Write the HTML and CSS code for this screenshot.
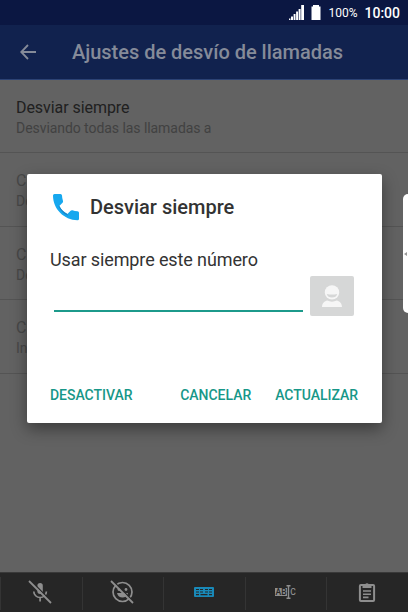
FILE: index.html
```html
<!DOCTYPE html>
<html lang="es">
<head>
    <meta charset="UTF-8">
    <title>Ajustes de desvío de llamadas</title>
    <link rel="stylesheet" href="styles.css">
</head>

<body>

    <div class="status">
        <svg class="signal" width="15" height="15" viewBox="0 0 15 15"><path d="M0 15v-1.500h1.500V15zM2 15v-3.500h2V15zM4.600 15V9h1.900v6zM7.100 15V6.500H9V15zM9.600 15V4h2v11zM12.200 15V0H15v15z"/></svg>
        <svg class="battery" width="10" height="15" viewBox="0 0 10 15"><path d="M2 0h6v1.5h1.5V15H.5V1.5H2z"/></svg>
        <span class="percent">100%</span>
        <span class="clock">10:00</span>
    </div>

    <header class="header">
        <svg class="back" width="16" height="16" viewBox="0 0 16 16"><path d="M16 8H1.5M8 1L1.2 8L8 15"/></svg>
        <h1>Ajustes de desvío de llamadas</h1>
    </header>

    <main class="content">
        <ul class="list">
            <li class="item active"><p class="name">Desviar siempre</p><p class="desc">Desviando todas las llamadas a</p></li>
            <li class="item"><p class="name">C</p><p class="desc">De</p></li>
            <li class="item"><p class="name">C</p><p class="desc">De</p></li>
            <li class="item"><p class="name">C</p><p class="desc">In</p></li>
        </ul>
    </main>

    <nav class="tools">
        <span class="tool">
            <svg width="24" height="24" viewBox="0 0 24 24"><rect class="fill" x="9.4" y="3" width="5.4" height="11" rx="2.7"/><path d="M5.8 11.5a6.3 6 0 0 0 12.6 0M12.1 17v4.5" stroke-width="1.7"/><path class="gap" d="M2.5 .5l22 22"/><path d="M1 1l22 22" stroke-width="1.8"/></svg>
        </span>
        <span class="tool">
            <svg width="24" height="24" viewBox="0 0 24 24"><circle cx="12.5" cy="12" r="9.5" stroke-width="1.7"/><circle class="fill" cx="9" cy="9.5" r="1.4"/><circle class="fill" cx="16" cy="9.5" r="1.4"/><path class="fill" d="M7 13h11c-1 6-10 6-11 0z"/><path class="gap" d="M2.5 .5l22 22"/><path d="M1 1l22 22" stroke-width="1.8"/></svg>
        </span>
        <span class="tool on">
            <svg width="20" height="10" viewBox="0 0 20 10"><rect class="fill" width="20" height="10" rx="1"/><path class="keys" d="M2 2.5h3M6 2.5h3M11 2.5h3M15 2.5h3M2 5h3M6 5h3M11 5h3M15 5h3M2 7.7h3M6.5 7.7h7M15 7.7h3"/></svg>
        </span>
        <span class="tool">
            <svg width="21" height="14" viewBox="0 0 21 14"><rect class="fill" y="3" width="12" height="8"/><text class="letters dark" x=".6" y="10">AB</text><path d="M11.5 .7h4M13.5 1v12M11.5 13.3h4" stroke-width="1.4"/><text class="letters" x="15.3" y="10">C</text></svg>
        </span>
        <span class="tool">
            <svg width="18" height="20" viewBox="0 0 18 20"><rect x="1.9" y="3" width="14.2" height="16" rx="1" stroke-width="2"/><path class="fill" d="M4.5 2.5h2.7a1.9 1.9 0 0 1 3.6 0h2.7V6h-9z"/><path d="M5 9h8M5 12.2h8M5 15.4h5.5" stroke-width="1.6"/></svg>
        </span>
    </nav>

    <div class="edge"><svg width="3" height="4" viewBox="0 0 3 4"><path d="M3 0v4L0 2z"/></svg></div>

    <div class="mask">
        <section class="dialog">
            <div class="title">
                <svg width="26" height="27" viewBox="0 0 26 27"><path d="M1.5 0H7.5q1.4 0 1.5 1.5q.1 2.9 1 5.5q.3 1-.5 1.8L6.3 12q3 5.5 8.1 8l3.2-3.2q.8-.8 1.8-.5q2.4.8 5.1.9q1.5.1 1.5 1.5v6q0 1.5-1.5 1.5C11 26 0 15 0 1.5Q0 0 1.5 0z"/><path class="shade" d="M5.2 11.5l1.1.5q3 5.5 8.1 8l.5 1.8Q8.5 19.5 5.2 11.5z"/></svg>
                <h2>Desviar siempre</h2>
            </div>
            <p class="label">Usar siempre este número</p>
            <div class="field">
                <input class="number" type="text">
                <button class="contact">
                    <svg width="20" height="22" viewBox="0 0 20 22"><circle cx="10" cy="7.4" r="7.2"/><path class="face" d="M4.8 9q5.2 1.2 10.4 0c-.7 4.8-9.7 4.800-10.400 0z"/><path d="M0 22c.3-4 2.500-6 5.300-6.500q4.700 2.300 9.400 0C17.500 16 19.700 18 20 22z"/></svg>
                </button>
            </div>
            <div class="actions">
                <button class="action">DESACTIVAR</button>
                <button class="action cancel">CANCELAR</button>
                <button class="action">ACTUALIZAR</button>
            </div>
        </section>
    </div>

</body>
</html>
```

FILE: styles.css
```css
* {margin: 0;padding: 0;box-sizing: border-box;}
body {display: flex;flex-direction: column;height: 612px;overflow: hidden;background: #626262;font-family: Roboto, sans-serif;}
svg {display: block;flex: none;}
button {border: 0;background: none;font-family: inherit;}

.status {display: flex;flex: none;align-items: center;justify-content: flex-end;height: 25px;padding-right: 8px;background: #0b1742;color: #fff;fill: #fff;}
.battery {margin-left: 7px;}
.percent {margin-left: 7px;font-size: 12px;}
.clock {margin-left: 7px;font-size: 14px;font-weight: 500;}

.header {display: flex;flex: none;align-items: center;height: 55px;padding: 0 20px;border-bottom: 1px solid #2c4274;background: #11224e;color: #858b99;}
.back {fill: none;stroke: #858b99;stroke-width: 1.8;}
.header h1 {margin-left: 36px;font-size: 20px;font-weight: 500;letter-spacing: -.02px;white-space: nowrap;}

.content {flex: 1;}
.list {list-style: none;}
.item {height: 73.6px;padding: 18px 16px 0;border-bottom: 1px solid #545454;color: #484848;}
.name {font-size: 16px;line-height: 20px;letter-spacing: -.06px;}
.desc {font-size: 14px;line-height: 20px;letter-spacing: -.06px;}
.active {height: 73px;}
.active .name {color: #202020;}
.active .desc {color: #414141;}

.tools {display: grid;flex: none;grid-template-columns: repeat(5, 1fr);height: 40px;border-top: 1px solid #393939;background: #262626;}
.tool {display: flex;align-items: center;justify-content: center;margin: 4px 0 2px;padding: 0 2px 3px 0;border-left: 1px solid #343434;color: #8e8e8e;}
.tool svg {fill: none;stroke: currentColor;}
.tool .fill {fill: currentColor;stroke: none;}
.tool .gap {stroke: #262626;stroke-width: 1.5;}
.tool.on {padding-right: 1px;color: #1989b8;}
.tool .keys {stroke: #262626;stroke-width: 1.2;}
.tool .letters {fill: currentColor;stroke: none;font-size: 8.5px;font-weight: 500;}
.tool .dark {fill: #262626;}

.edge {position: absolute;top: 194px;right: 0;display: flex;align-items: center;width: 5px;height: 119px;padding-left: 1px;border-radius: 5px 0 0 5px;background: #fff;fill: #999;}

.mask {position: absolute;top: 0;right: 0;left: 0;padding: 173.5px 26.5px 0;}
.dialog {height: 249px;padding: 19.5px 23.5px 0;border-radius: 2px;background: #fff;box-shadow: 0 6px 16px rgba(0, 0, 0, .4);color: #333;}
.title {display: flex;align-items: center;height: 28px;margin-left: 3px;fill: #16a8ef;}
.title h2 {margin-left: 11px;font-size: 20px;font-weight: 500;}
.shade {fill: #1b87c8;}
.label {margin-top: 27px;font-size: 18px;line-height: 24px;letter-spacing: -.11px;}
.field {display: flex;margin-top: 4px;}
.number {width: 249px;height: 36px;margin-left: 4px;border: 0;border-bottom: 2px solid #1c9a8b;outline: none;font-size: 18px;}
.contact {display: flex;align-items: center;justify-content: center;width: 44px;height: 40px;margin-left: 7px;border-radius: 2px;background: #d6d7d7;fill: #f6f6f6;}
.contact .face {fill: #d6d7d7;}
.actions {display: flex;margin-top: 67px;}
.action {color: #179788;font-size: 14px;font-weight: 500;line-height: 24px;letter-spacing: -.03px;}
.cancel {margin: 0 24px 0 auto;}
```
